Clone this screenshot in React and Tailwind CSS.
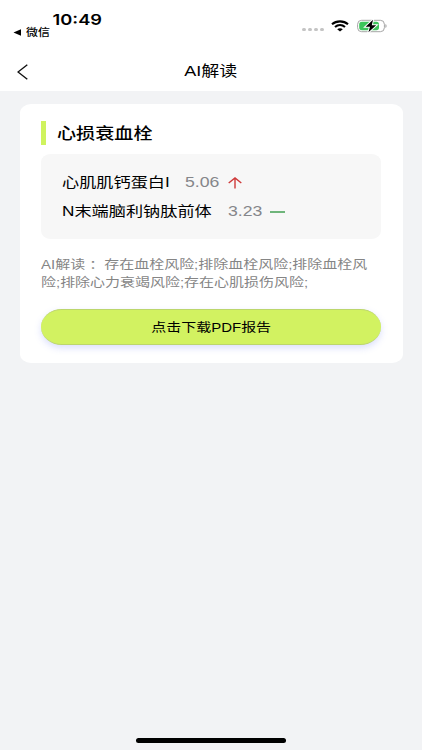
import React from 'react';
import clsx from 'clsx';

const results = [
    { id: 1, name: '心肌肌钙蛋白I', value: '5.06', trend: 'up' },
    { id: 2, name: 'N末端脑利钠肽前体', value: '3.23', trend: 'flat' },
];

const summary = [
    'AI解读 ：存在血栓风险;排除血栓风险;排除血栓风',
    '险;排除心力衰竭风险;存在心肌损伤风险;',
];

// Text with wide glyphs, stretched horizontally from its own origin
function Wide({ className, children }) {
    return (
        <span className={clsx('inline-block whitespace-nowrap scale-x-[1.218]', className)}>
            {children}
        </span>
    );
}

function StatusBar() {
    return (
        <div className="flex h-[50px] justify-between">
            <div className="flex flex-col pl-[13px] pt-[12px]">
                <Wide className="origin-left pl-[32.5px] font-['Inter'] text-[15px] font-semibold leading-[15px]">
                    10:49
                </Wide>
                <div className="flex h-[11px] items-center gap-[5px]">
                    <svg width="8" height="7" viewBox="0 0 8 7">
                        <path d="M0.5 3.5L8 0.3V6.7Z" fill="#000" />
                    </svg>
                    <Wide className="origin-left text-[9.8px] font-medium leading-[11px]">微信</Wide>
                </div>
            </div>
            <div className="flex h-[50px] items-center pr-[34px]">
                <div className="mt-[9px] flex gap-[2px]">
                    {[0, 1, 2, 3].map(i => (
                        <span key={i} className="h-[3px] w-[4px] rounded-[1.5px] bg-[#c4c4c4]" />
                    ))}
                </div>
                <svg className="ml-[7px] mt-[1px]" width="18" height="12" viewBox="0 0 18 12" fill="none" stroke="#000">
                    <path d="M1 4.3C5.4 0.4 12.6 0.4 17 4.3" strokeWidth="2.1" />
                    <path d="M4 7C6.9 4.5 11.1 4.5 14 7" strokeWidth="2.1" />
                    <path d="M6.2 9.2C7.8 7.8 10.2 7.8 11.8 9.2L9 11.6Z" fill="#000" stroke="none" />
                </svg>
                <svg className="ml-[8px] mr-[1px] mt-[1px]" width="30" height="14" viewBox="0 0 30 14">
                    <rect x="0.6" y="1.3" width="26.8" height="11.4" rx="4" fill="#fff" stroke="#a5a5a5" />
                    <rect x="2.2" y="2.8" width="19.8" height="8.4" rx="2.6" fill="#3dc55b" />
                    <path d="M28.4 5V9C30 8.5 30 5.5 28.4 5Z" fill="#a5a5a5" />
                    <path d="M16 0.8L8.6 7.8H13L11.4 13.2L19.2 6.2H14.8Z" fill="#000" stroke="#fff" strokeWidth="2" paintOrder="stroke" />
                </svg>
            </div>
        </div>
    );
}

function TrendIcon({ trend }) {
    if (trend === 'up') {
        return (
            <svg className="ml-[1px]" width="14" height="12" viewBox="0 0 14 12" fill="none" stroke="#cf3a3a" strokeWidth="1.4">
                <path d="M0.7 6L7 1L13.3 6M7 1V11.5" />
            </svg>
        );
    }
    return <span className="mt-[1px] h-[2px] w-[15px] bg-[#6fb57b]" />;
}

export default function App() {
    return (
        <div className="flex h-[750px] w-[422px] flex-col overflow-hidden bg-[#f2f3f5] font-['Liberation_Sans','Noto_Sans_CJK_SC',sans-serif] text-black">
            <header className="h-[91px] bg-white">
                <StatusBar />
                <div className="flex h-[42px] items-center">
                    <svg className="ml-[17px] mt-[1px]" width="11" height="16" viewBox="0 0 11 16" fill="none" stroke="#111" strokeWidth="1.4">
                        <path d="M10.3 0.8L1 8L10.3 15.2" />
                    </svg>
                    <div className="flex-1 pr-[28px] text-center leading-[20px]">
                        <Wide className="origin-center text-[14.8px]">AI解读</Wide>
                    </div>
                </div>
            </header>

            <main className="ml-[19.5px] mt-[13px] h-[258.5px] w-[383px] rounded-[11px/9px] bg-white px-[21.5px] pt-[17px]">
                {/* Section title */}
                <div className="flex h-[24px] items-center">
                    <span className="h-[24px] w-[5px] bg-[#cff35e]" />
                    <Wide className="ml-[11px] mt-[2px] origin-left text-[15.7px] font-medium leading-[24px]">心损衰血栓</Wide>
                </div>

                {/* Test results */}
                <div className="mt-[9px] h-[85px] w-[340px] rounded-[10px/8px] bg-[#f7f7f7] pl-[21px] pt-[14px]">
                    {results.map(r => (
                        <div key={r.id} className="flex h-[29px] items-center">
                            <div className={r.trend === 'up' ? 'w-[123px]' : 'w-[166px]'}>
                                <Wide className="origin-left text-[14.1px] leading-[29px]">{r.name}</Wide>
                            </div>
                            <div className="w-[42px]">
                                <Wide className="origin-left text-[14.5px] leading-[29px] text-[#85868a]">{r.value}</Wide>
                            </div>
                            <TrendIcon trend={r.trend} />
                        </div>
                    ))}
                </div>

                {/* Interpretation */}
                <div className="mt-[17px] flex flex-col text-[12.3px] leading-[18px] text-[#858585]">
                    {summary.map(line => (
                        <Wide key={line} className="origin-left">{line}</Wide>
                    ))}
                </div>

                <button className="mt-[17px] flex h-[36px] w-[340px] items-center justify-center rounded-[21px/18px] border-y border-[#bcd66c] bg-[#d2f261] shadow-[0_3px_7px_rgba(90,110,240,0.22)]">
                    <Wide className="origin-center pt-[1px] text-[12.3px] leading-[18px]">点击下载PDF报告</Wide>
                </button>
            </main>

            <div className="mx-auto mb-[7px] mt-auto h-[5px] w-[150px] rounded-full bg-black" />
        </div>
    );
}
